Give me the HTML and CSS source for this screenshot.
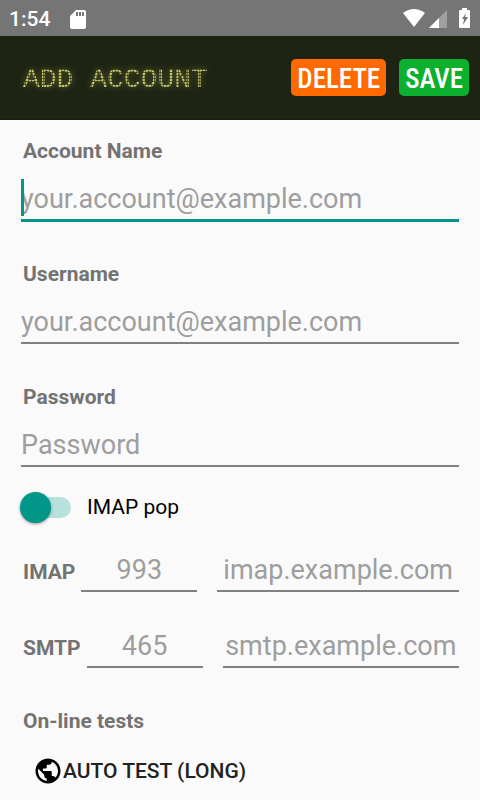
FILE: index.html
```html
<!DOCTYPE html>
<html lang="en">
<head>
<meta charset="utf-8">
<meta name="viewport" content="width=device-width, initial-scale=1">
<title>Add account</title>
<link rel="stylesheet" href="styles.css">
</head>
<body>
<div class="status">
  <span class="clock">1:54</span>
  <svg class="sd" width="16" height="20" viewBox="0 0 16 20" aria-hidden="true"><path fill="#fff" fill-rule="evenodd" d="M6 1H14Q16 1 16 3V18Q16 20 14 20H2Q0 20 0 18V7ZM6 3V7H8V3ZM9 3V7H11V3ZM12 3V7H14V3Z"/></svg>
  <svg class="signals" width="68" height="20" viewBox="0 0 68 20" aria-hidden="true">
    <path fill="#fff" d="M0 4Q11-4 22 4L11 18Z"/>
    <path fill="#a0a0a0" d="M44 1V19H26Z"/>
    <path fill="#fff" d="M36 9V19H26Z"/>
    <path fill="#fff" d="M59 -1H64V1H66Q67 1 67 2V18Q67 19 66 19H57Q56 19 56 18V2Q56 1 57 1H59Z"/>
    <path fill="#757575" d="M63 4L59 10H61L60 16L65 8H62Z"/>
  </svg>
</div>
<header class="bar">
  <h1 class="title">ADD ACCOUNT</h1>
  <button class="action delete" type="button">DELETE</button>
  <button class="action save" type="button">SAVE</button>
</header>
<main>
  <form class="form">
    <div class="field">
      <label class="label" for="name">Account Name</label>
      <input class="input active" id="name" type="text" placeholder="your.account@example.com">
      <span class="caret"></span>
    </div>
    <div class="field">
      <label class="label" for="user">Username</label>
      <input class="input" id="user" type="text" placeholder="your.account@example.com">
    </div>
    <div class="field">
      <label class="label" for="pass">Password</label>
      <input class="input" id="pass" type="password" placeholder="Password">
    </div>
    <div class="toggle">
      <input class="switch" id="pop" type="checkbox" role="switch">
      <label for="pop">IMAP pop</label>
    </div>
    <div class="server">
      <label class="label" for="imap-port">IMAP</label>
      <input class="input port" id="imap-port" type="text" placeholder="993">
      <input class="input host" type="text" aria-label="IMAP host" placeholder="imap.example.com">
    </div>
    <div class="server">
      <label class="label" for="smtp-port">SMTP</label>
      <input class="input port" id="smtp-port" type="text" placeholder="465">
      <input class="input host" type="text" aria-label="SMTP host" placeholder="smtp.example.com">
    </div>
    <h2 class="label tests">On-line tests</h2>
    <button class="test" type="button">
      <svg width="30" height="30" viewBox="0 0 24 24" aria-hidden="true"><path d="M12 2C6.48 2 2 6.48 2 12s4.480 10 10 10 10-4.480 10-10S17.520 2 12 2zm-1 17.930c-3.950-.490-7-3.850-7-7.930 0-.620.080-1.210.210-1.790L9 15v1c0 1.100.900 2 2 2v1.930zm6.900-2.540c-.260-.810-1-1.390-1.900-1.390h-1v-3c0-.550-.450-1-1-1H8v-2h2c.550 0 1-.450 1-1V7h2c1.100 0 2-.900 2-2v-.410c2.930 1.190 5 4.060 5 7.410 0 2.080-.800 3.970-2.100 5.390z"/></svg>
      <span>AUTO TEST (LONG)</span>
    </button>
  </form>
</main>
</body>
</html>
```
FILE: styles.css
```css
* { box-sizing: border-box; }
body {
  margin: 0;
  background: #fafafa;
  font-family: Roboto, "Liberation Sans", sans-serif;
}
.status {
  display: flex;
  align-items: center;
  height: 36px;
  padding: 2px 9px 0;
  background: #757575;
  color: #fff;
}
.clock { font-size: 21px; font-weight: 500; }
.sd { margin-left: 20px; }
.signals { margin-left: auto; overflow: visible; }
.bar {
  display: flex;
  align-items: center;
  height: 84px;
  padding: 0 11px 0 23px;
  background: #1e2414;
  border-bottom: 1px solid #171c10;
}
.title {
  flex: 1;
  margin: 0;
  padding-top: 4px;
  font: 28px/32px "Liberation Mono", monospace;
  color: transparent;
  background:
    repeating-linear-gradient(90deg, transparent 0 2px, #1e241488 2px 3px),
    repeating-linear-gradient(0deg, #c4c468 0 2px, #5c6030 2px 3px);
  background-clip: text;
  -webkit-background-clip: text;
  filter: drop-shadow(0 0 3px #b4b84e66);
}
.action {
  height: 37px;
  padding: 3px 6px 0;
  border: 0;
  border-radius: 5px;
  color: #fff;
  font: 500 27px/34px "Roboto Condensed", Roboto, sans-serif;
}
.delete { background: #ff6a00; margin-right: 13px; }
.save { background: #0bb02f; }
.form { padding: 13px 21px 5px; }
.field {
  position: relative;
  display: grid;
  grid-template-rows: 36px 53px;
  align-items: start;
  margin-bottom: 34px;
}
.label {
  padding-left: 2px;
  color: #737373;
  font-size: 21px;
  font-weight: 700;
  line-height: 36px;
}
.input {
  width: 100%;
  min-width: 0;
  height: 52px;
  padding: 10px 0 0;
  border: 0;
  border-bottom: 2px solid #808080;
  border-radius: 0;
  outline: 0;
  background: none;
  color: #212121;
  font: 27px/40px Roboto, "Liberation Sans", sans-serif;
}
.input::placeholder { color: #9e9e9e; opacity: 1; }
.active { height: 53px; border-bottom: 3px solid #009688; }
.caret {
  position: absolute;
  left: 0;
  bottom: 6px;
  width: 3px;
  height: 37px;
  background: #009688;
}
.toggle {
  display: flex;
  align-items: center;
  gap: 16px;
  height: 48px;
  margin: -19px 0 9px;
  font-size: 21px;
}
.switch {
  position: relative;
  appearance: none;
  width: 50px;
  height: 21px;
  margin: 0;
  border-radius: 11px;
  background: #b8e1dd;
}
.switch::before {
  content: "";
  position: absolute;
  left: -1px;
  top: -5px;
  width: 31px;
  height: 31px;
  border-radius: 50%;
  background: #009688;
  box-shadow: 0 1px 3px #0006;
}
.server { display: flex; align-items: center; margin-bottom: 24px; }
.server .label { padding: 12px 6px 0 2px; }
.port { flex: none; width: 116px; margin-right: 20px; text-align: center; }
.host { flex: 1; text-align: center; }
.tests { margin: 35px 0 8px; }
.test {
  display: flex;
  align-items: center;
  height: 48px;
  padding: 0 12px;
  border: 0;
  background: none;
  color: #212121;
  font: 500 21px Roboto, "Liberation Sans", sans-serif;
}
.test svg { fill: #000; }
```
